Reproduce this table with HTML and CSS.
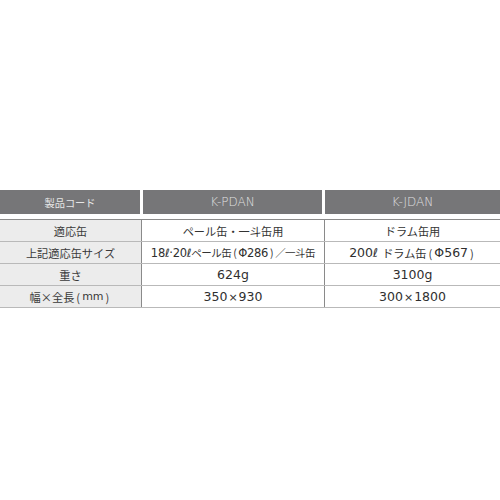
FILE: index.html
```html
<!DOCTYPE html>
<html lang="ja">
<head>
<meta charset="utf-8">
<link rel="stylesheet" href="styles.css">
</head>
<body>
<div class="spec">
  <div class="head">
    <div class="hcell">製品コード</div>
    <div class="hcell"><span class="hn">K-PDAN</span></div>
    <div class="hcell"><span class="hn">K-JDAN</span></div>
  </div>
  <div class="body">
    <div class="row">
      <div class="cell label">適応缶</div>
      <div class="cell">ペール缶・一斗缶用</div>
      <div class="cell">ドラム缶用</div>
    </div>
    <div class="row">
      <div class="cell label">上記適応缶サイズ</div>
      <div class="cell tight"><span class="n">18ℓ·20ℓ</span>ペール缶<span class="p">(</span><span class="n">Φ286</span><span class="p">)</span>／一斗缶</div>
      <div class="cell"><span class="n">200ℓ&nbsp;</span>ドラム缶<span class="p">(</span><span class="n">Φ567</span><span class="p">)</span></div>
    </div>
    <div class="row">
      <div class="cell label">重さ</div>
      <div class="cell"><span class="n">624g</span></div>
      <div class="cell"><span class="n">3100g</span></div>
    </div>
    <div class="row">
      <div class="cell label">幅×全長<span class="p">(</span><span class="m">mm</span><span class="p">)</span></div>
      <div class="cell"><span class="n">350<span class="x">×</span>930</span></div>
      <div class="cell"><span class="n">300<span class="x">×</span>1800</span></div>
    </div>
  </div>
</div>
</body>
</html>
```

FILE: styles.css
```css
html, body {
  margin: 0;
  padding: 0;
  background: #ffffff;
}

body {
  font-family: "Noto Sans CJK JP", "Noto Sans", sans-serif;
  color: #333333;
  width: 500px;
  height: 500px;
}

.spec {
  padding-top: 190px;
}

.head {
  display: grid;
  grid-template-columns: 140px 179px 1fr;
  column-gap: 3px;
  height: 24px;
}

.hcell {
  background: #767678;
  color: #e6e6e6;
  font-size: 10.2px;
  font-weight: 400;
  display: flex;
  align-items: center;
  justify-content: center;
}

.hn {
  font-family: "DejaVu Sans", "Liberation Sans", sans-serif;
  font-size: 12px;
  font-weight: 200;
  color: #e0e0e0;
}

.body {
  margin-top: 5px;
  border-top: 1px solid #8a8a8a;
}

.row {
  display: grid;
  grid-template-columns: 142px 183px 1fr;
  height: 22px;
  border-bottom: 1px solid #b9b9b9;
  box-sizing: border-box;
}

.cell {
  display: flex;
  align-items: center;
  justify-content: center;
  font-size: 11.2px;
  color: #333333;
  white-space: nowrap;
}

.cell:not(:last-child) {
  border-right: 1px solid #8a8a8a;
}

.label {
  background: #ececec;
  color: #3a3a3a;
}

.n {
  font-family: "DejaVu Sans", "Liberation Sans", sans-serif;
  font-size: 12.5px;
  color: #2f2f2f;
}

.p {
  padding: 0 2px;
}

.tight {
  font-size: 10.5px;
  letter-spacing: -0.5px;
}

.tight .n {
  font-size: 11.5px;
  letter-spacing: -0.3px;
}

.x {
  font-size: 11px;
  padding: 0 1px;
}

.m {
  font-family: "DejaVu Sans", "Liberation Sans", sans-serif;
  font-size: 11px;
}
```
